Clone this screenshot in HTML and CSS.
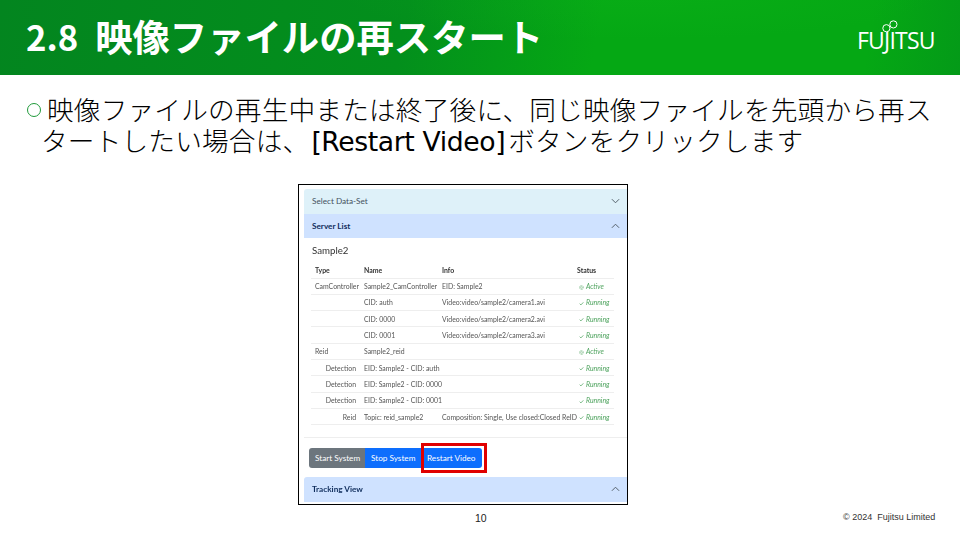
FILE: index.html
```html
<!DOCTYPE html>
<html lang="ja">
<head>
<meta charset="utf-8">
<title>2.8 映像ファイルの再スタート</title>
<link rel="stylesheet" href="styles.css">
</head>
<body>
<div class="slide">
  <header class="head">
    <h1 class="title"><span class="num">2.8</span>映像ファイルの再スタート</h1>
    <div class="logo">
      <svg class="logo-mark" width="16" height="13" viewBox="0 0 16 13"><circle cx="4.4" cy="8.2" r="3.6" fill="none" stroke="#fff" stroke-width="1"/><circle cx="11.4" cy="4.4" r="3.6" fill="none" stroke="#fff" stroke-width="1"/></svg>
      <span class="logo-text">FUJITSU</span>
    </div>
  </header>
  <main class="content">
    <p class="bullet"><span class="mark"></span>映像ファイルの再生中または終了後に、同じ映像ファイルを先頭から再スタートしたい場合は、<span class="latin">[Restart Video]</span>ボタンをクリックします</p>
    <div class="shot-wrap">
      <div class="shot">
        <div class="shot-inner">
          <div class="acc acc-cyan"><span>Select Data-Set</span><svg class="chev" viewBox="0 0 10 6"><path d="M1 1l4 4 4-4"/></svg></div>
          <div class="acc acc-blue"><b>Server List</b><svg class="chev" viewBox="0 0 10 6"><path d="M1 5l4-4 4 4"/></svg></div>
          <div class="panel">
            <h2 class="sample">Sample2</h2>
            <table class="tbl">
              <thead><tr><th>Type</th><th>Name</th><th>Info</th><th>Status</th></tr></thead>
              <tbody>
                <tr><td>CamController</td><td>Sample2_CamController</td><td>EID: Sample2</td><td class="ok"><svg class="ico ico-a" viewBox="0 0 6 6"><circle cx="3" cy="3" r="2.3"/><circle cx="3" cy="3" r="1"/></svg>Active</td></tr>
                <tr><td></td><td>CID: auth</td><td>Video:video/sample2/camera1.avi</td><td class="ok"><svg class="ico" viewBox="0 0 6 6"><path d="M.8 3.2l1.5 1.5L5.2 1.6"/></svg>Running</td></tr>
                <tr><td></td><td>CID: 0000</td><td>Video:video/sample2/camera2.avi</td><td class="ok"><svg class="ico" viewBox="0 0 6 6"><path d="M.8 3.2l1.5 1.5L5.2 1.6"/></svg>Running</td></tr>
                <tr><td></td><td>CID: 0001</td><td>Video:video/sample2/camera3.avi</td><td class="ok"><svg class="ico" viewBox="0 0 6 6"><path d="M.8 3.2l1.5 1.5L5.2 1.6"/></svg>Running</td></tr>
                <tr><td>Reid</td><td>Sample2_reid</td><td></td><td class="ok"><svg class="ico ico-a" viewBox="0 0 6 6"><circle cx="3" cy="3" r="2.3"/><circle cx="3" cy="3" r="1"/></svg>Active</td></tr>
                <tr><td class="r">Detection</td><td>EID: Sample2 - CID: auth</td><td></td><td class="ok"><svg class="ico" viewBox="0 0 6 6"><path d="M.8 3.2l1.5 1.5L5.2 1.6"/></svg>Running</td></tr>
                <tr><td class="r">Detection</td><td>EID: Sample2 - CID: 0000</td><td></td><td class="ok"><svg class="ico" viewBox="0 0 6 6"><path d="M.8 3.2l1.5 1.5L5.2 1.6"/></svg>Running</td></tr>
                <tr><td class="r">Detection</td><td>EID: Sample2 - CID: 0001</td><td></td><td class="ok"><svg class="ico" viewBox="0 0 6 6"><path d="M.8 3.2l1.5 1.5L5.2 1.6"/></svg>Running</td></tr>
                <tr><td class="r">Reid</td><td>Topic: reid_sample2</td><td>Composition: Single, Use closed:Closed ReID</td><td class="ok"><svg class="ico" viewBox="0 0 6 6"><path d="M.8 3.2l1.5 1.5L5.2 1.6"/></svg>Running</td></tr>
              </tbody>
            </table>
          </div>
          <div class="btns">
            <span class="btn btn-gray">Start System</span><span class="btn">Stop System</span><span class="btn btn-last">Restart Video<i class="hl"></i></span>
          </div>
          <div class="acc acc-blue acc-last"><b>Tracking View</b><svg class="chev" viewBox="0 0 10 6"><path d="M1 5l4-4 4 4"/></svg></div>
        </div>
      </div>
    </div>
  </main>
  <footer class="foot">
    <span class="page">10</span>
    <span class="copy">© 2024&nbsp; Fujitsu Limited</span>
  </footer>
</div>
</body>
</html>
```
FILE: styles.css
```css
* { box-sizing: border-box; }
html, body { margin: 0; padding: 0; }
body { width: 960px; height: 540px; overflow: hidden; background: #fff; font-family: "Noto Sans CJK JP", "Liberation Sans", sans-serif; }
.slide { width: 960px; height: 540px; display: flex; flex-direction: column; }

.head {
  height: 75px; flex: none; display: flex; align-items: center; justify-content: space-between;
  padding: 0 25px 0 26px;
  background:
    radial-gradient(ellipse 300px 45px at 640px -5px, rgba(20,190,30,.2), rgba(20,190,30,0) 100%),
    linear-gradient(100deg, #03851f 0%, #038f1c 42%, #05a814 62%, #05a814 90%, #049a18 100%);
}
.title { margin: -3px 0 0; color: #fff; font-size: 37.33px; font-weight: 700; line-height: 75px; font-family: "Noto Sans CJK JP", sans-serif; display: flex; }
.num { margin-right: 17px; font-size: 34.67px; }
.logo { position: relative; width: 78px; height: 38px; color: #fff; margin-top: 2px; }
.logo-mark { position: absolute; left: 25px; top: 0; }
.logo-text { position: absolute; left: 0; top: 5px; font-family: "Open Sans", sans-serif; font-size: 23px; line-height: 30px; letter-spacing: -.8px; font-weight: 500; }

.content { flex: 1; display: flex; flex-direction: column; min-height: 0; }
.bullet {
  margin: 20px 25px 0 41px; position: relative; color: #000;
  font-size: 26.67px; line-height: 31px; font-weight: 300; text-indent: 6px; letter-spacing: .18px;
  font-family: "DejaVu Sans", "Noto Sans CJK JP", sans-serif;
}
.latin { display: inline-block; text-indent: 0; font-weight: 400; letter-spacing: -.4px; padding: 0 3px 0 2px; }
.mark { position: absolute; left: -14px; top: 8px; width: 14px; height: 14px; border: 1.6px solid #1f9a3a; border-radius: 50%; }

.shot-wrap { display: flex; padding: 27px 0 0 298px; }
.shot { width: 330px; height: 321px; border: 1px solid #000; padding: 4px 0 0 5px; background: #fff; }
.shot-inner { filter: blur(.4px); font-family: "Lato", sans-serif; font-size: 6.9px; color: #555; width: 323px; }
.acc { height: 24.5px; display: flex; align-items: center; justify-content: space-between; padding: 0 7px 0 8px; font-size: 8.2px; }
.acc-cyan { background: #def1f9; color: #44525e; border-radius: 3px 0 0 0; }
.acc-blue { background: #cfe2ff; color: #0f2d5c; }
.acc-last { border-radius: 3px 0 0 0; }
.chev { width: 9px; height: 6px; fill: none; stroke: #55606a; stroke-width: 1.1; }
.panel { height: 200px; padding: 0 14px 0 7px; border-bottom: 1px solid #eee; }
.sample { margin: 0 0 0 1px; padding-top: 5px; height: 24px; font-size: 9.7px; line-height: 14px; font-weight: 400; color: #333; }
.tbl { border-collapse: collapse; width: 303px; table-layout: fixed; margin-top: 0; }
.tbl th { font-weight: 700; color: #333; text-align: left; height: 16px; padding: 0 4px; border-bottom: 1px solid #eee; }
.tbl td { height: 16.3px; padding: 0 4px; border-bottom: 1px solid #eee; white-space: nowrap; overflow: visible; }
.tbl th:nth-child(1) { width: 49px; }
.tbl th:nth-child(2) { width: 78px; }
.tbl th:nth-child(3) { width: 135px; }
.r { text-align: right; }
.ok { color: #4ea35e; font-style: italic; }
.ico { width: 5px; height: 5px; margin: 0 2.5px 0 1.5px; vertical-align: -.5px; fill: none; stroke: #4ea35e; stroke-width: .9; }
.ico-a { stroke-width: .7; stroke-dasharray: 1 .4; }

.btns { display: flex; padding: 10px 0 0 5px; height: 39px; }
.btn { height: 20px; display: flex; align-items: center; padding: 0 6px; background: #0d6efd; color: #fff; font-size: 8.2px; position: relative; white-space: nowrap; }
.btn:nth-child(2) { width: 56px; }
.btn-gray { width: 56px; background: #6c757d; border-radius: 3px 0 0 3px; }
.btn-last { width: 61px; border-radius: 0 3px 3px 0; }
.hl { position: absolute; left: 0; top: -5px; width: 66px; height: 30px; border: 3.5px solid #e00000; }

.foot { position: absolute; left: 0; top: 510px; width: 960px; height: 16px; }
.page { position: absolute; left: 475px; top: 2px; font-family: "Liberation Sans", sans-serif; font-size: 10.5px; color: #222; }
.copy { position: absolute; left: 843px; top: 2px; font-family: "Liberation Sans", sans-serif; font-size: 9px; color: #333; }
```
